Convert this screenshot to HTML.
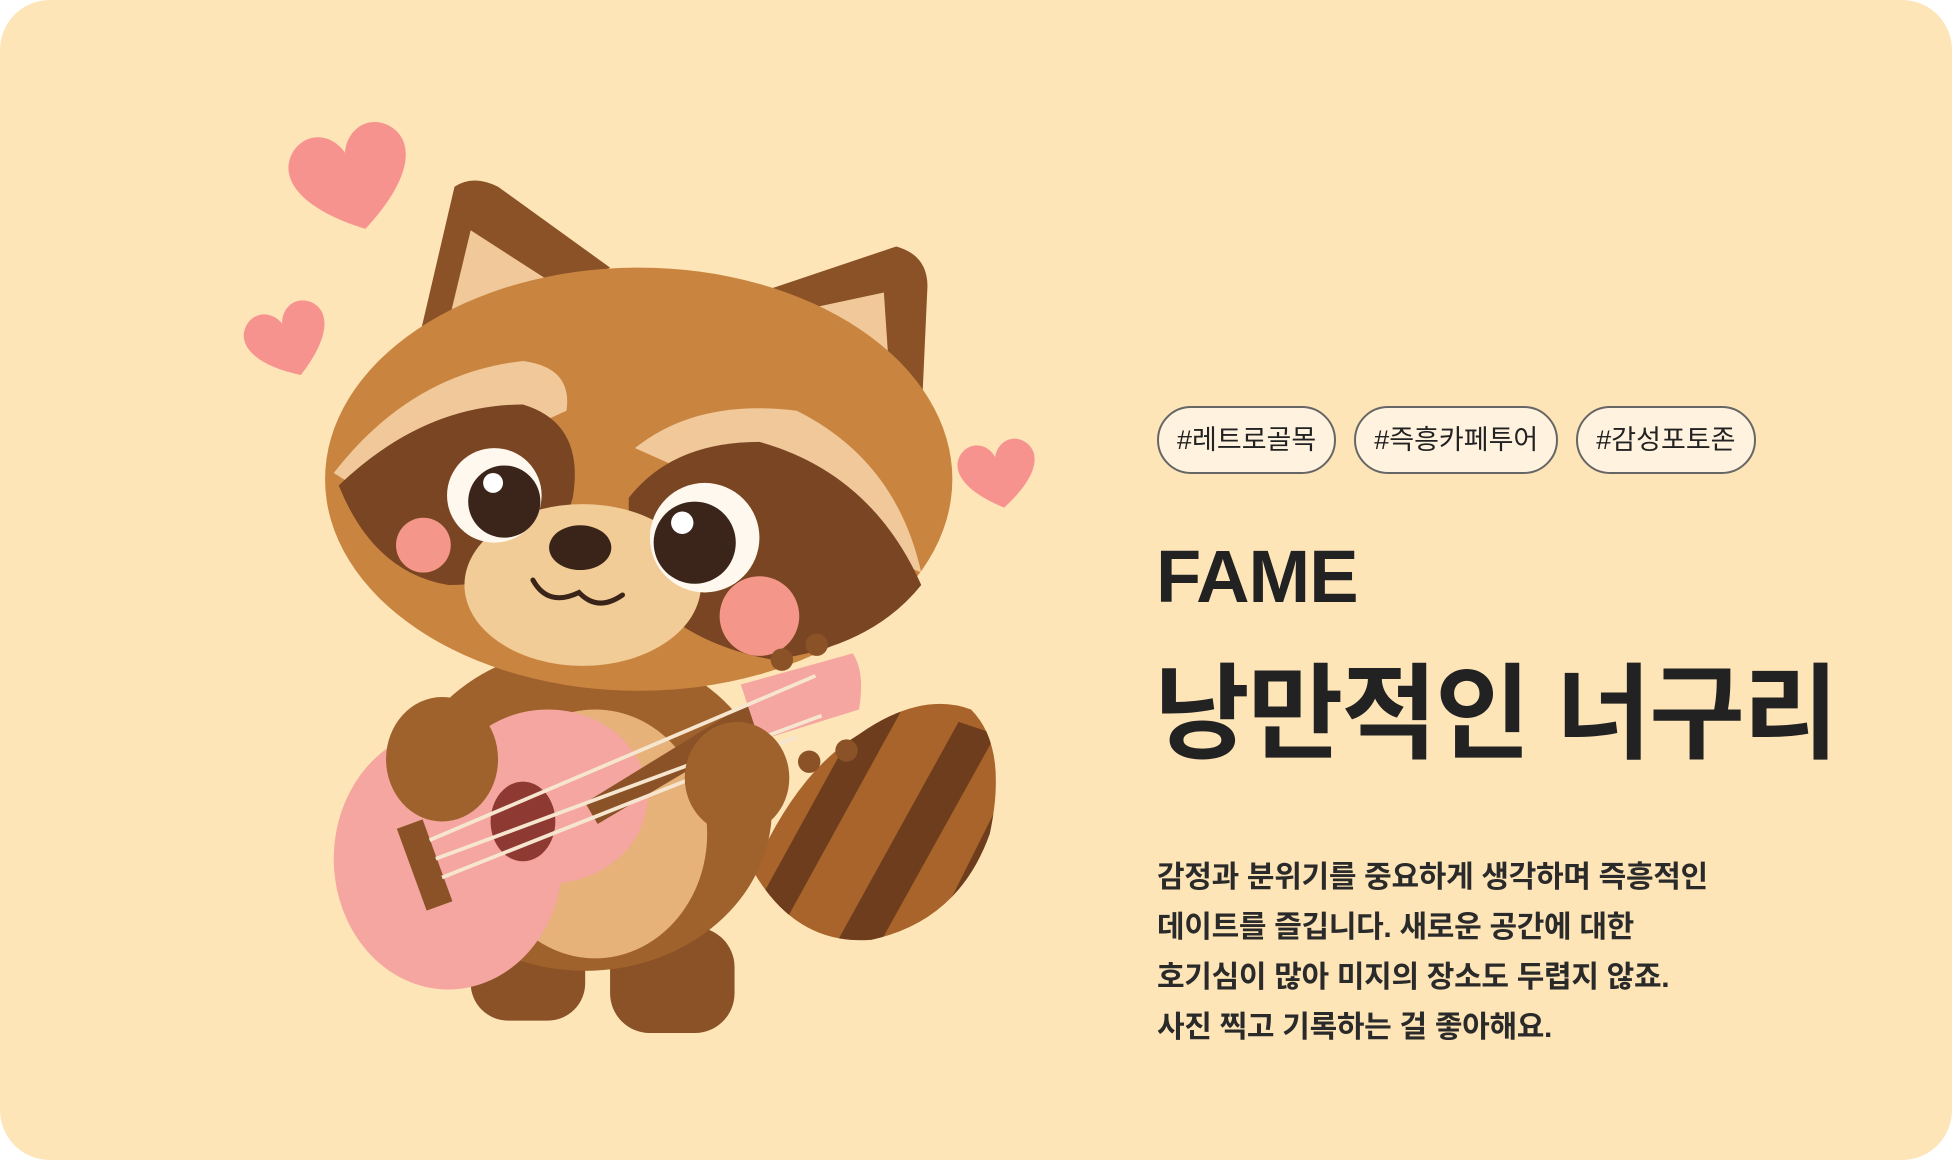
<!DOCTYPE html>
<html><head><meta charset="utf-8"><style>
html,body{margin:0;padding:0;background:#fff;}
.card{position:relative;width:1952px;height:1160px;background:#fee5b8;border-radius:50px;overflow:hidden;font-family:"Liberation Sans","Noto Sans CJK KR",sans-serif;color:#222;}
.tags{position:absolute;left:1157px;top:406px;display:flex;gap:18px;}
.tag{height:68px;box-sizing:border-box;border:2px solid #666;border-radius:34px;background:#fff3e0;padding:0 18px;font-size:27px;line-height:64px;color:#222;}
.fame{position:absolute;left:1156px;top:532px;font-size:74px;font-weight:700;letter-spacing:-1px;line-height:90px;}
.title{position:absolute;left:1154px;top:655px;font-size:104px;font-weight:700;line-height:120px;letter-spacing:-2px;}
.desc{position:absolute;left:1157px;top:853px;font-size:30px;font-weight:700;line-height:50px;color:#2a2a2a;letter-spacing:-0.3px;}
svg{position:absolute;left:0;top:0;}
</style></head><body>
<div class="card">
<svg width="1952" height="1160" viewBox="0 0 1568 932">
<defs><path id="h" d="M0,35 C-40,10 -50,-15 -35,-30 C-22,-42 -5,-35 0,-20 C5,-35 22,-42 35,-30 C50,-15 40,10 0,35Z"/>
<clipPath id="tc"><path d="M605,700 Q640,620 690,590 Q740,555 780,570 Q810,600 795,670 Q770,740 700,755 Q640,760 605,700Z"/></clipPath></defs>
<use href="#h" fill="#f7938e" transform="translate(283,145) rotate(-15) scale(1.15)"/>
<use href="#h" fill="#f7938e" transform="translate(232,275) rotate(-20) scale(0.8)"/>
<use href="#h" fill="#f7938e" transform="translate(802,382) rotate(-10) scale(0.75)"/>
<!-- tail -->
<g clip-path="url(#tc)">
<rect x="580" y="540" width="240" height="240" fill="#a8642a"/>
<path d="M700,560 L730,560 L620,760 L590,760Z" fill="#6e3d1e"/>
<path d="M770,580 L800,590 L700,770 L665,770Z" fill="#6e3d1e"/>
<path d="M800,650 L820,660 L770,770 L740,770Z" fill="#6e3d1e"/>
</g>
<!-- legs -->
<rect x="378" y="740" width="92" height="80" rx="30" fill="#8a5226"/>
<rect x="490" y="745" width="100" height="85" rx="32" fill="#8a5226"/>
<!-- body -->
<ellipse cx="470" cy="650" rx="150" ry="130" fill="#a0622c"/>
<ellipse cx="478" cy="670" rx="90" ry="100" fill="#e6b27a"/>
<!-- ears -->
<path d="M330,300 L365,150 Q380,140 400,150 L490,215Z" fill="#8a5226"/>
<path d="M360,260 L378,185 L440,225Z" fill="#f0c89a"/>
<path d="M595,240 L720,198 Q745,205 745,230 L740,340Z" fill="#8a5226"/>
<path d="M640,250 L710,235 L715,310Z" fill="#f0c89a"/>
<!-- head -->
<ellipse cx="513" cy="385" rx="252" ry="170" fill="#c98540"/>
<path d="M268,380 Q330,300 420,290 Q460,295 455,330 L300,400Z" fill="#f0c89a"/>
<path d="M510,360 Q560,320 640,330 Q720,370 740,460 L600,400Z" fill="#f0c89a"/>
<path d="M272,390 Q340,325 420,325 Q470,340 460,400 Q440,470 360,470 Q300,460 272,390Z" fill="#7a4522"/>
<path d="M505,400 Q540,355 610,355 Q700,380 740,470 Q700,520 620,530 Q540,515 505,460Z" fill="#7a4522"/>
<ellipse cx="468" cy="470" rx="95" ry="65" fill="#f2cc97"/>
<circle cx="397" cy="398" r="38" fill="#fff8ee"/><circle cx="405" cy="403" r="29" fill="#3b251b"/><circle cx="396" cy="388" r="8" fill="#fff"/>
<circle cx="566" cy="432" r="44" fill="#fff8ee"/><circle cx="558" cy="436" r="33" fill="#3b251b"/><circle cx="548" cy="420" r="9" fill="#fff"/>
<ellipse cx="466" cy="440" rx="25" ry="18" fill="#3a2318"/>
<path d="M428,466 Q440,488 465,476 Q480,492 500,478" fill="none" stroke="#3a2318" stroke-width="4" stroke-linecap="round"/>
<circle cx="340" cy="438" r="22" fill="#f4968a"/>
<circle cx="610" cy="495" r="32" fill="#f4968a"/>
<!-- guitar -->
<ellipse cx="360" cy="690" rx="92" ry="105" fill="#f5a6a0"/>
<ellipse cx="440" cy="640" rx="80" ry="70" fill="#f5a6a0"/>
<ellipse cx="420" cy="660" rx="26" ry="32" fill="#8e3a32"/>
<rect x="330" y="660" width="22" height="70" fill="#8a5226" transform="rotate(-20 341 695)"/>
<path d="M470,645 L600,565 L610,585 L480,662Z" fill="#8a5226"/>
<path d="M595,550 L685,525 Q695,540 690,570 L610,595Z" fill="#f5a6a0"/>
<circle cx="628" cy="530" r="9" fill="#8a5226"/><circle cx="656" cy="518" r="9" fill="#8a5226"/>
<circle cx="650" cy="612" r="9" fill="#8a5226"/><circle cx="680" cy="603" r="9" fill="#8a5226"/>
<g stroke="#f6e6d0" stroke-width="3"><line x1="345" y1="675" x2="655" y2="543"/><line x1="350" y1="690" x2="660" y2="575"/><line x1="355" y1="705" x2="640" y2="592"/></g>
<!-- paws -->
<ellipse cx="355" cy="610" rx="45" ry="50" fill="#a0622c"/>
<ellipse cx="592" cy="625" rx="42" ry="45" fill="#a0622c"/>
</svg>
<div class="tags"><div class="tag">#레트로골목</div><div class="tag">#즉흥카페투어</div><div class="tag">#감성포토존</div></div>
<div class="fame">FAME</div>
<div class="title">낭만적인 너구리</div>
<div class="desc">감정과 분위기를 중요하게 생각하며 즉흥적인<br>데이트를 즐깁니다. 새로운 공간에 대한<br>호기심이 많아 미지의 장소도 두렵지 않죠.<br>사진 찍고 기록하는 걸 좋아해요.</div>
</div>
</body></html>
